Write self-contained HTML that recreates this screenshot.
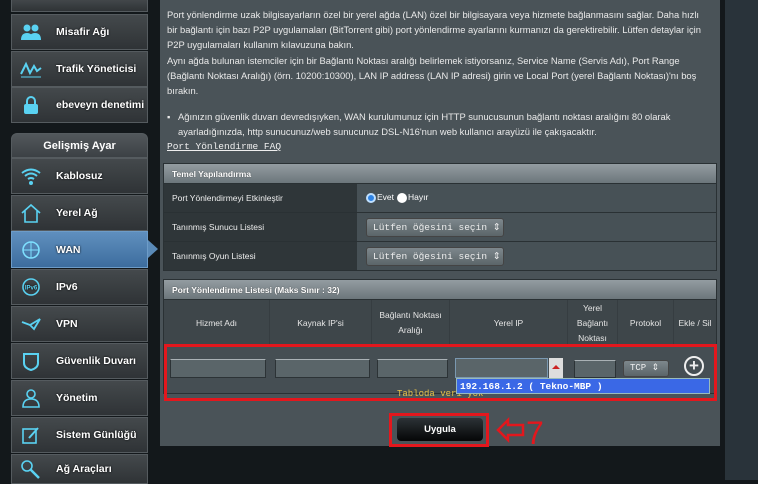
<!DOCTYPE html>
<html><head><meta charset="utf-8"><style>
*{margin:0;padding:0;box-sizing:border-box}
body{width:758px;height:480px;overflow:hidden;background:#13181b;font-family:"Liberation Sans",sans-serif;position:relative}
.abs{position:absolute}
.side{left:11px;width:137px;background:linear-gradient(#44494c,#2f3336);border:1px solid #555b5f;color:#fff;font-weight:bold;font-size:10.5px;display:flex;align-items:center;text-shadow:0 0 2px #000}
.side .ic{width:22px;height:20px;margin:0 14px 0 8px;display:flex;align-items:center;justify-content:center}
.side svg{width:22px;height:20px}
.main{left:160px;top:0;width:560px;height:446px;background:#4a5358}
.txt{color:#eaeaea;font-size:9.4px;line-height:15.2px;white-space:nowrap}
.hdr{background:linear-gradient(#939ca1,#6c767b);color:#fff;font-weight:bold;font-size:8.5px;padding-left:8px;display:flex;align-items:center;text-shadow:0 0 1px #333}
.lab{background:#2f3639;color:#eee;font-size:8.5px;padding-left:8px;display:flex;align-items:center}
.val{background:#475156}
.sel{background:linear-gradient(#7d878c,#5b6569);border-radius:3px;color:#eee;font-family:"Liberation Mono",monospace;font-size:9.5px;padding-left:6px;line-height:17px;border:1px solid #444}
.ch{color:#e6e6e6;font-size:8.5px;text-align:center;display:flex;align-items:center;justify-content:center;line-height:15px;background:#3e464a;border-right:1px solid #363d41}
.inp{background:#5a6569;border:1px solid #2c3336;border-top-color:#a9b1b5}
</style></head><body>
<div class="abs" style="left:725px;top:0;width:33px;height:480px;background:#29333a"></div>
<!-- sidebar -->
<div class="abs side" style="top:-2px;height:14px"></div>
<div class="abs side" style="top:14px;height:36px"><div class="ic"><svg viewBox="0 0 22 20"><circle cx="7" cy="6" r="3.5" fill="#5ad2f2"/><circle cx="15" cy="6" r="3.5" fill="#5ad2f2"/><path d="M1 18q0-7 6-7q6 0 6 7zM9 18q0-7 6-7q6 0 6 7z" fill="#5ad2f2"/></svg></div>Misafir Ağı</div>
<div class="abs side" style="top:51px;height:36px"><div class="ic"><svg viewBox="0 0 22 20"><path d="M1 15L6 5l4 9 4-7 3 5 4-3" stroke="#5ad2f2" stroke-width="2" fill="none"/><path d="M1 18h20" stroke="#5ad2f2"/></svg></div>Trafik Yöneticisi</div>
<div class="abs side" style="top:87px;height:36px"><div class="ic"><svg viewBox="0 0 22 20"><path d="M7 9V6a4 4 0 0 1 8 0v3" stroke="#5ad2f2" stroke-width="2" fill="none"/><rect x="4" y="9" width="14" height="10" rx="2" fill="#5ad2f2"/></svg></div>ebeveyn denetimi</div>
<div class="abs" style="left:11px;top:133px;width:137px;height:25px;background:linear-gradient(#52585c,#3c4145);border-radius:6px 6px 0 0;border:1px solid #555b5f;color:#fff;font-weight:bold;font-size:11px;text-align:center;line-height:24px">Gelişmiş Ayar</div>
<div class="abs side" style="top:158px;height:36px"><div class="ic"><svg viewBox="0 0 22 20"><path d="M2 7q9-7 18 0M5 10q6-5 12 0M8 13q3-2 6 0" stroke="#5ad2f2" stroke-width="2" fill="none"/><circle cx="11" cy="17" r="2" fill="#5ad2f2"/></svg></div>Kablosuz</div>
<div class="abs side" style="top:195px;height:36px"><div class="ic"><svg viewBox="0 0 22 20"><path d="M2 10L11 2l9 8M5 8v11h12V8" stroke="#5ad2f2" stroke-width="1.6" fill="none"/></svg></div>Yerel Ağ</div>
<div class="abs side" style="top:231px;height:37px;background:linear-gradient(#5f8fbe,#3d6d9e);border-color:#6d9cc8"><div class="ic"><svg viewBox="0 0 22 20"><circle cx="11" cy="10" r="8" stroke="#7ee0ff" stroke-width="1.6" fill="none"/><path d="M3 10h16M11 2v16" stroke="#7ee0ff"/></svg></div>WAN</div>
<div class="abs" style="left:148px;top:240px;width:0;height:0;border-top:9px solid transparent;border-bottom:9px solid transparent;border-left:10px solid #5a8ab8"></div>
<div class="abs side" style="top:269px;height:36px"><div class="ic"><svg viewBox="0 0 22 20"><circle cx="11" cy="10" r="8" stroke="#5ad2f2" stroke-width="1.6" fill="none"/><text x="11" y="12.5" font-size="6" fill="#5ad2f2" text-anchor="middle" font-family="Liberation Sans">IPv6</text></svg></div>IPv6</div>
<div class="abs side" style="top:306px;height:36px"><div class="ic"><svg viewBox="0 0 22 20"><path d="M2 8l8 3 10-6-6 10-4-4" stroke="#5ad2f2" stroke-width="1.8" fill="none"/></svg></div>VPN</div>
<div class="abs side" style="top:343px;height:36px"><div class="ic"><svg viewBox="0 0 22 20"><path d="M4 3h14v9q0 5-7 7q-7-2-7-7z" stroke="#5ad2f2" stroke-width="2" fill="none"/></svg></div>Güvenlik Duvarı</div>
<div class="abs side" style="top:380px;height:36px"><div class="ic"><svg viewBox="0 0 22 20"><circle cx="11" cy="6" r="4" stroke="#5ad2f2" stroke-width="1.6" fill="none"/><path d="M3 19q0-8 8-8q8 0 8 8z" stroke="#5ad2f2" stroke-width="1.6" fill="none"/></svg></div>Yönetim</div>
<div class="abs side" style="top:417px;height:36px"><div class="ic"><svg viewBox="0 0 22 20"><rect x="3" y="4" width="13" height="14" stroke="#5ad2f2" stroke-width="1.6" fill="none"/><path d="M9 13l9-10" stroke="#5ad2f2" stroke-width="2"/></svg></div>Sistem Günlüğü</div>
<div class="abs side" style="top:454px;height:30px"><div class="ic"><svg viewBox="0 0 22 20"><circle cx="7" cy="7" r="5" stroke="#5ad2f2" stroke-width="1.6" fill="none"/><path d="M10 10l9 9" stroke="#5ad2f2" stroke-width="2.5"/></svg></div>Ağ Araçları</div>
<!-- main -->
<div class="abs main"></div>
<div class="abs txt" style="left:167px;top:7px">Port yönlendirme uzak bilgisayarların özel bir yerel ağda (LAN) özel bir bilgisayara veya hizmete bağlanmasını sağlar. Daha hızlı<br>bir bağlantı için bazı P2P uygulamaları (BitTorrent gibi) port yönlendirme ayarlarını kurmanızı da gerektirebilir. Lütfen detaylar için<br>P2P uygulamaları kullanım kılavuzuna bakın.<br>Aynı ağda bulunan istemciler için bir Bağlantı Noktası aralığı belirlemek istiyorsanız, Service Name (Servis Adı), Port Range<br>(Bağlantı Noktası Aralığı) (örn. 10200:10300), LAN IP address (LAN IP adresi) girin ve Local Port (yerel Bağlantı Noktası)'nı boş<br>bırakın.</div>
<div class="abs txt" style="left:167px;top:109px">▪</div>
<div class="abs txt" style="left:178px;top:109px">Ağınızın güvenlik duvarı devredışıyken, WAN kurulumunuz için HTTP sunucusunun bağlantı noktası aralığını 80 olarak<br>ayarladığınızda, http sunucunuz/web sunucunuz DSL-N16'nun web kullanıcı arayüzü ile çakışacaktır.</div>
<div class="abs" style="left:167px;top:141px;color:#eee;font-family:'Liberation Mono',monospace;font-size:9.5px;text-decoration:underline">Port Yönlendirme FAQ</div>
<div class="abs" style="left:163px;top:163px;width:554px;height:108px;background:#2a3134"></div>
<div class="abs hdr" style="left:164px;top:164px;width:552px;height:19px">Temel Yapılandırma</div>
<div class="abs lab" style="left:164px;top:184px;width:193px;height:28px">Port Yönlendirmeyi Etkinleştir</div>
<div class="abs val" style="left:357px;top:184px;width:359px;height:28px"></div>
<div class="abs lab" style="left:164px;top:213px;width:193px;height:28px">Tanınmış Sunucu Listesi</div>
<div class="abs val" style="left:357px;top:213px;width:359px;height:28px"></div>
<div class="abs lab" style="left:164px;top:242px;width:193px;height:28px">Tanınmış Oyun Listesi</div>
<div class="abs val" style="left:357px;top:242px;width:359px;height:28px"></div>
<div class="abs" style="left:366px;top:193px;width:10px;height:10px;border-radius:50%;background:#2f84e6;border:2px solid #bfe0ff"></div>
<div class="abs" style="left:377px;top:192px;color:#fff;font-size:8.5px">Evet</div>
<div class="abs" style="left:397px;top:193px;width:10px;height:10px;border-radius:50%;background:#fff"></div>
<div class="abs" style="left:408px;top:192px;color:#fff;font-size:8.5px">Hayır</div>
<div class="abs sel" style="left:366px;top:218px;width:138px;height:19px">Lütfen öğesini seçin ⇕</div>
<div class="abs sel" style="left:366px;top:247px;width:138px;height:19px">Lütfen öğesini seçin ⇕</div>
<div class="abs" style="left:163px;top:279px;width:554px;height:115px;background:#2a3134"></div>
<div class="abs hdr" style="left:164px;top:280px;width:552px;height:19px">Port Yönlendirme Listesi (Maks Sınır : 32)</div>
<div class="abs" style="left:164px;top:300px;width:552px;height:46px;display:flex">
<div class="ch" style="width:106px">Hizmet Adı</div><div class="ch" style="width:102px">Kaynak IP'si</div><div class="ch" style="width:78px">Bağlantı Noktası<br>Aralığı</div><div class="ch" style="width:118px">Yerel IP</div><div class="ch" style="width:50px">Yerel<br>Bağlantı<br>Noktası</div><div class="ch" style="width:56px">Protokol</div><div class="ch" style="width:42px;border:0">Ekle / Sil</div></div>
<div class="abs" style="left:164px;top:347px;width:552px;height:46px;background:#454e53"></div>
<div class="abs inp" style="left:170px;top:359px;width:96px;height:19px"></div>
<div class="abs inp" style="left:275px;top:359px;width:95px;height:19px"></div>
<div class="abs inp" style="left:377px;top:359px;width:71px;height:19px"></div>
<div class="abs inp" style="left:455px;top:358px;width:93px;height:20px;border-color:#7a98b0"></div>
<div class="abs" style="left:549px;top:358px;width:14px;height:20px;background:#ddd"><div style="margin:7px auto 0;width:0;height:0;border-left:4px solid transparent;border-right:4px solid transparent;border-bottom:4px solid #c22"></div></div>
<div class="abs inp" style="left:574px;top:360px;width:42px;height:18px"></div>
<div class="abs sel" style="left:623px;top:360px;width:46px;height:17px;font-size:9px;line-height:14px">TCP ⇕</div>
<div class="abs" style="left:684px;top:356px;width:20px;height:20px;border-radius:50%;border:2px solid #eee;color:#eee;font-size:17px;line-height:15px;text-align:center;font-weight:bold">+</div>
<div class="abs" style="left:397px;top:389px;color:#e6c24a;font-family:'Liberation Mono',monospace;font-size:9px">Tabloda veri yok</div>
<div class="abs" style="left:456px;top:378px;width:254px;height:16px;background:#3a68e6;color:#fff;font-family:'Liberation Mono',monospace;font-weight:bold;font-size:9.5px;line-height:15px;padding-left:3px;border:1px solid #9bb">192.168.1.2 ( Tekno-MBP )</div>
<div class="abs" style="left:164px;top:344px;width:553px;height:57px;border:3px solid #e3171d"></div>
<div class="abs" style="left:389px;top:413px;width:100px;height:34px;border:3px solid #e3171d"></div>
<div class="abs" style="left:397px;top:418px;width:86px;height:23px;background:linear-gradient(#2c3236,#050607);border-radius:4px;color:#fff;font-weight:bold;font-size:9.5px;text-align:center;line-height:23px">Uygula</div>
<svg class="abs" style="left:495px;top:414px" width="60" height="32" viewBox="0 0 60 32"><path d="M3 16L13 6v5h15v10H13v5z" stroke="#e3171d" stroke-width="2.5" fill="none"/><text x="31" y="30" font-size="32" fill="#e3171d" font-family="Liberation Sans">7</text></svg>
</body></html>
